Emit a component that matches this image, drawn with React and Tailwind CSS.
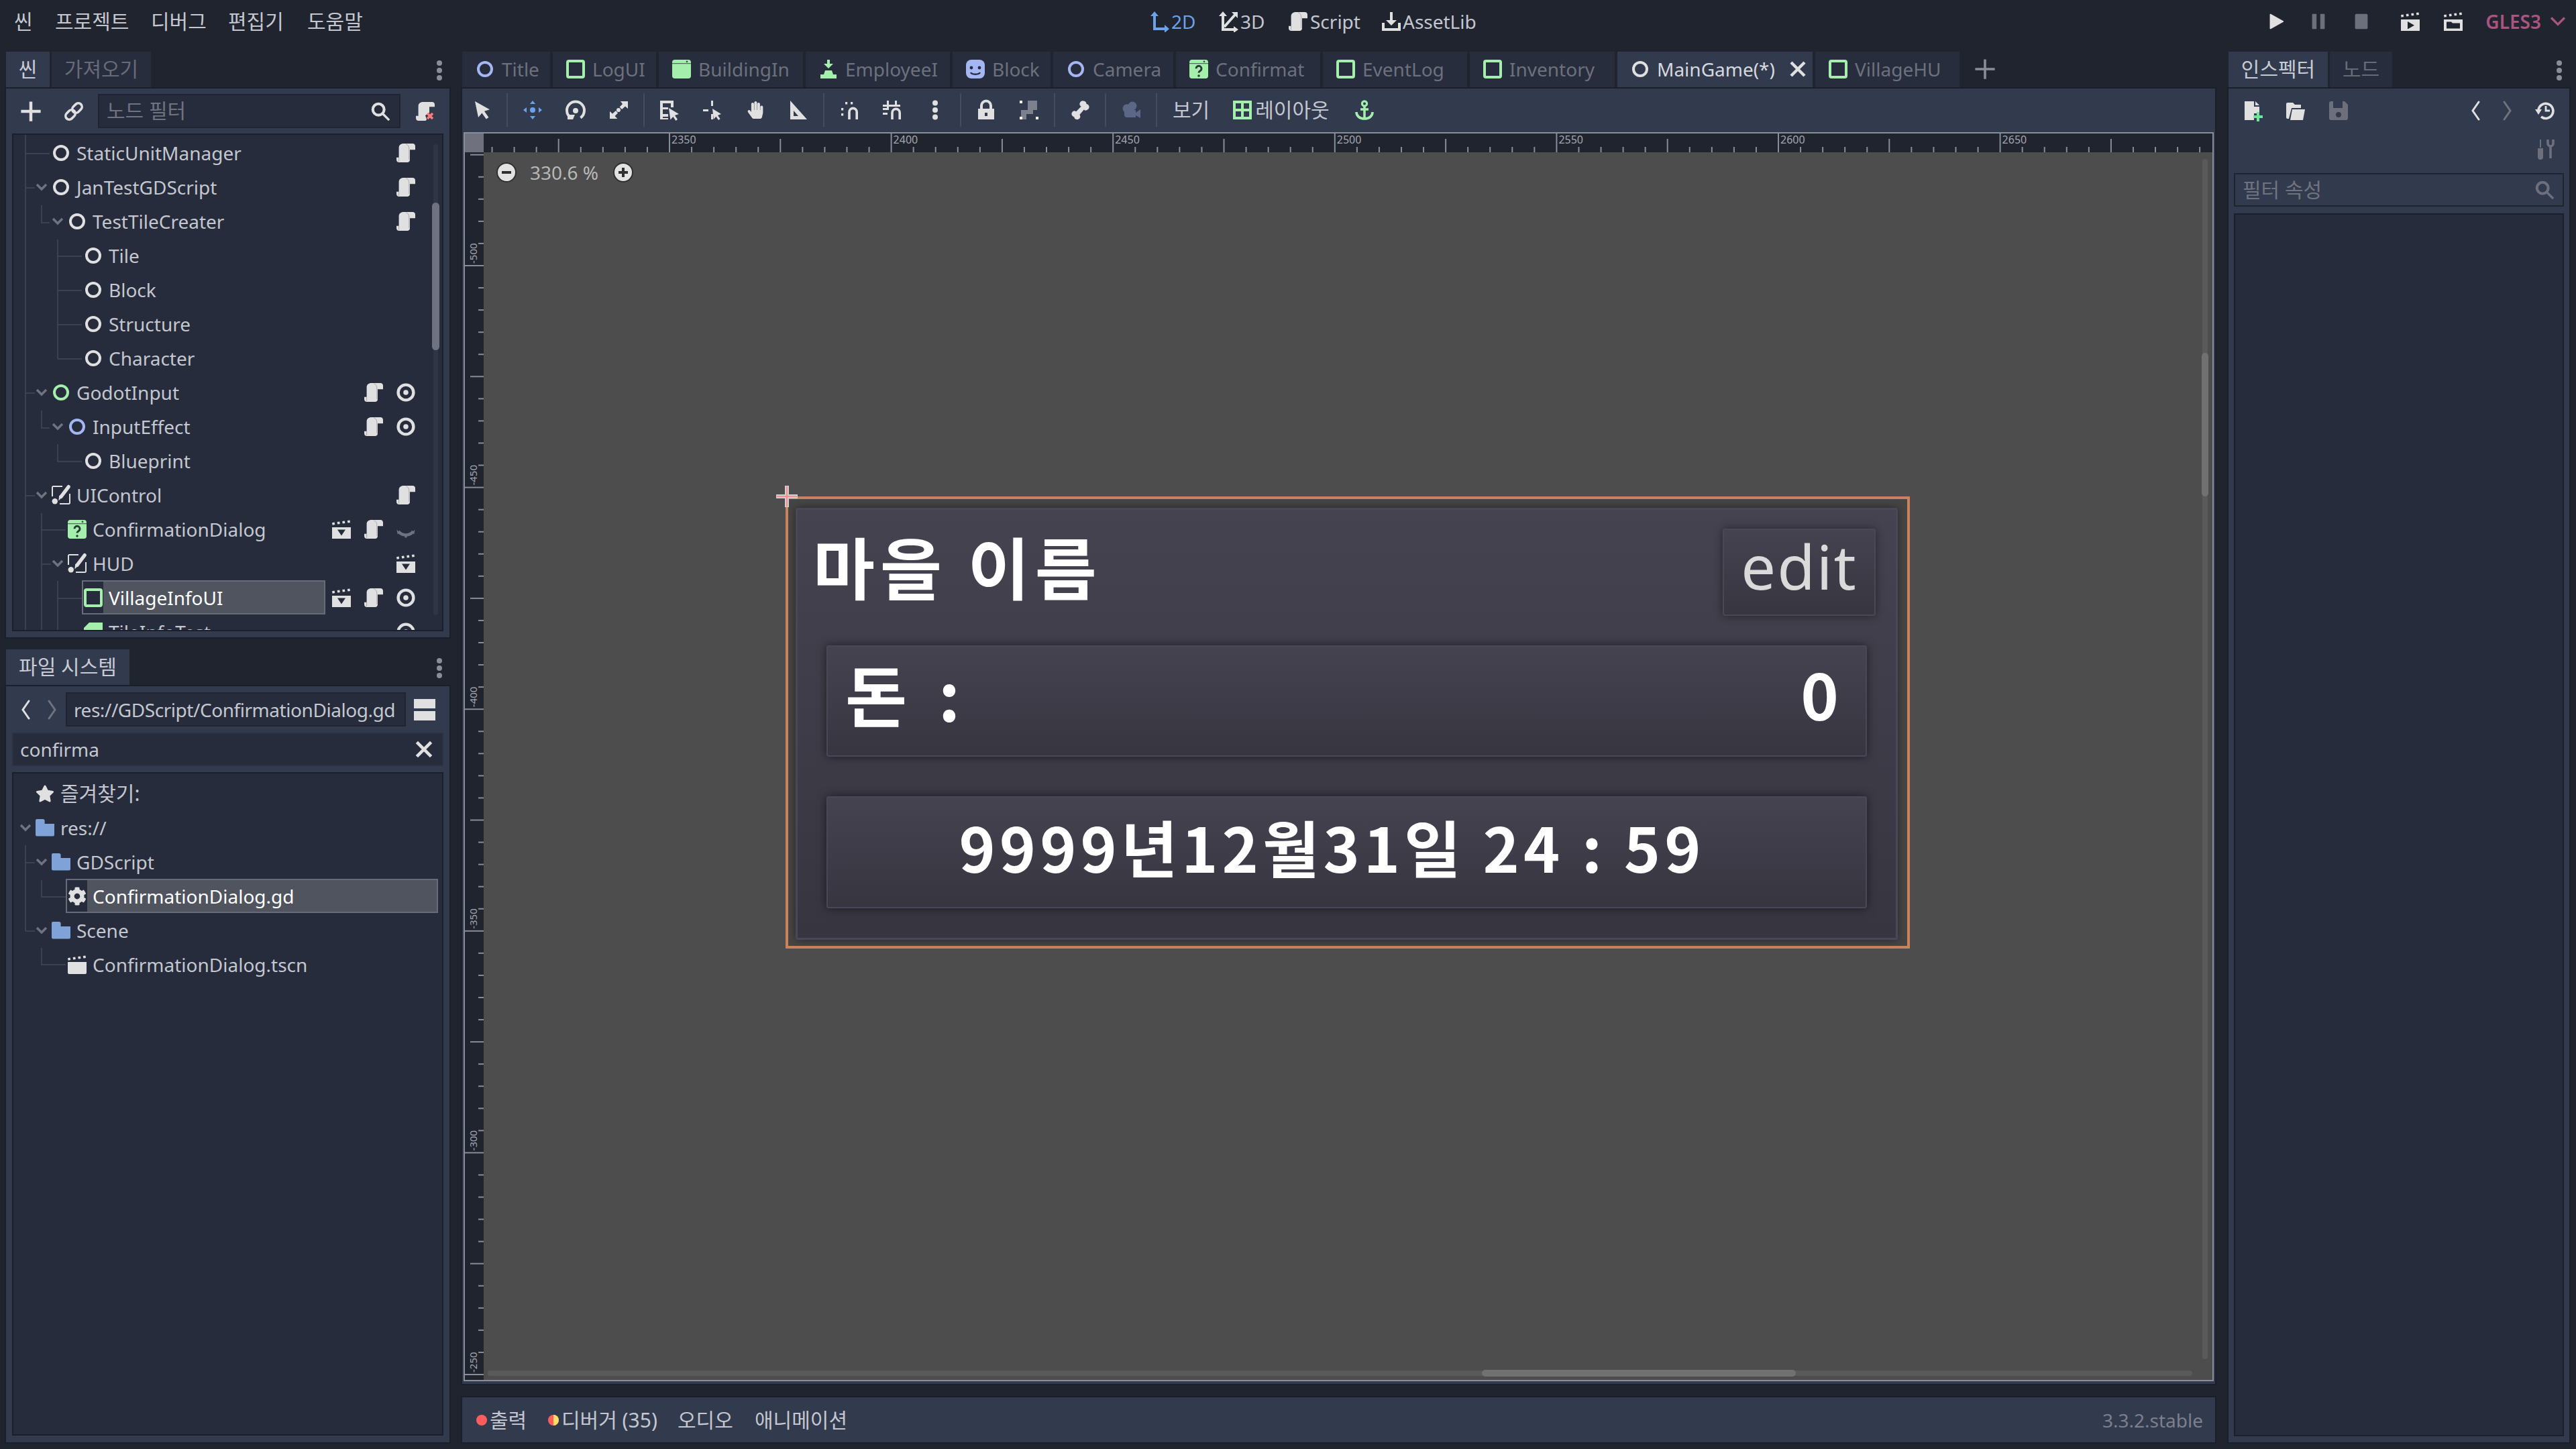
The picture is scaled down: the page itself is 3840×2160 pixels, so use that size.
import { FaCog, FaStar, FaHandPaper } from 'react-icons/fa';

const WHITE = '#e0e0e0';
const DIM = '#6f7380';
const GREEN = '#a5efac';
const BLUE = '#a5b7f3';
const TREE_BG = '#262c3b';

function Ico({ size = 32, children, className = '' }) {
  return (
    <svg viewBox="0 0 16 16" width={size} height={size} className={`shrink-0 ${className}`}>
      {children}
    </svg>
  );
}

const Ring = ({ c = WHITE }) => (
  <Ico><circle cx="8" cy="8" r="5" fill="none" stroke={c} strokeWidth="2" /></Ico>
);
const PanelBox = () => (
  <Ico><rect x="2" y="2" width="12" height="12" rx="1" fill="none" stroke={GREEN} strokeWidth="2" /></Ico>
);
const DialogBox = ({ q = true }) => (
  <Ico>
    <rect x="1" y="1" width="14" height="14" rx="2" fill={GREEN} />
    <rect x="1" y="3.6" width="14" height=".5" fill="#3c5048" />
    <circle cx="12" cy="2.4" r=".7" fill="#3c5048" />
    {q && <path d="M6 7.6a2 2 0 1 1 3.1 1.7c-.8.5-1.1.8-1.1 1.5" fill="none" stroke="#2a3a34" strokeWidth="1.5" />}
    {q && <circle cx="8" cy="13" r=".9" fill="#2a3a34" />}
  </Ico>
);
const BrushCtl = () => (
  <Ico>
    <path d="M9 1.5H2.2a.7.7 0 0 0-.7.7V9M14.5 7v6.8a.7.7 0 0 1-.7.7H7" fill="none" stroke={WHITE} strokeWidth="1" />
    <path d="M13.6 1.8 8 9.2" fill="none" stroke={WHITE} strokeWidth="2.6" strokeLinecap="round" />
    <path d="M6.6 8.2l2 1.6-2.4 2.4z" fill={WHITE} />
    <circle cx="3.4" cy="12.6" r="2.1" fill={WHITE} />
  </Ico>
);
const Script = ({ c = WHITE }) => (
  <Ico>
    <path d="M6.4 1H13c1.2 0 2 .8 2 2v2.6h-4V13c0 1.2-.8 2-2 2H3c-1.2 0-2-.8-2-2v-1.6h1.8V4.2C2.8 2.2 4.2 1 6.4 1z" fill={c} />
    <path d="M8.2 1.4C9.6 2 10.4 3 10.4 4.8V13" fill="none" stroke="#a8a8a8" strokeWidth=".5" />
    <path d="M2.8 11.4v3" fill="none" stroke="#a8a8a8" strokeWidth=".5" />
  </Ico>
);
const Ticks = ({ c = WHITE }) => (
  <path d="M1 3.1l1.8-.4.3 1.8-1.8.4zM4.8 2.5l1.8-.3.3 1.8-1.8.3zM8.6 2l1.8-.3.3 1.800-1.800.3zM12.4 1.500l1.800-.3.3 1.800-1.800.3z" fill={c} />
);
const Clapper = ({ kind = 'down', bg = TREE_BG }) => (
  <Ico>
    <Ticks />
    <path d="M1 6.5h14V15H1z" fill={WHITE} />
    {kind === 'down' && <path d="M5 8.3h6l-3 4.4z" fill={bg} />}
    {kind === 'play' && <path d="M6 8v5.8l5-2.9z" fill={bg} />}
    {kind === 'folder' && <path d="M3 8.3h3.5l1 1H13v4H3z" fill={bg} />}
  </Ico>
);
const Eye = () => (
  <Ico>
    <circle cx="8" cy="8" r="5.7" fill="none" stroke={WHITE} strokeWidth="2.2" />
    <circle cx="8" cy="8" r="1.9" fill={WHITE} />
  </Ico>
);
const EyeOff = () => (
  <Ico>
    <path d="M2.5 9.5c1.2 1.8 3.2 2.7 5.5 2.700s4.300-.9 5.500-2.700" fill="none" stroke={DIM} strokeWidth="2.2" />
    <path d="M1.2 8.3l2.3 2.2-1.600 1.200zM14.800 8.300l-2.300 2.200 1.600 1.200zM7 11.500h2l-.3 2.700H7.300z" fill={DIM} />
  </Ico>
);
const Folder = () => (
  <Ico>
    <path d="M2 1.500h4.500c.8 0 1.300.5 1.300 1.300v2.200H15v8.300a1 1 0 0 1-1 1H2a1 1 0 0 1-1-1v-10.800a1 1 0 0 1 1-1z" fill="#7fa3d8" />
  </Ico>
);
const FilmFile = () => (
  <Ico>
    <Ticks />
    <path d="M1 6h14v8a1 1 0 0 1-1 1H2a1 1 0 0 1-1-1z" fill={WHITE} />
  </Ico>
);
const Chevron = ({ c = DIM }) => (
  <svg viewBox="0 0 20 20" width="20" height="20" className="shrink-0">
    <path d="M3 6l7 7 7-7" fill="none" stroke={c} strokeWidth="3.5" />
  </svg>
);
const Search = ({ c = WHITE }) => (
  <Ico size={30}>
    <circle cx="6.5" cy="6.5" r="4.5" fill="none" stroke={c} strokeWidth="2.2" />
    <path d="M10 10l5 5" stroke={c} strokeWidth="1.8" fill="none" />
  </Ico>
);
const Kebab = ({ c = '#8b8e98' }) => (
  <svg viewBox="0 0 8 30" width="8" height="30" className="shrink-0">
    <circle cx="4" cy="4" r="4" fill={c} /><circle cx="4" cy="15" r="4" fill={c} /><circle cx="4" cy="26" r="4" fill={c} />
  </svg>
);
const Angle = ({ left = true, c = WHITE }) => (
  <svg viewBox="0 0 16 32" width="16" height="32" className="shrink-0">
    <path d={left ? 'M13 3 4 16l9 13' : 'M3 3l9 13-9 13'} fill="none" stroke={c} strokeWidth="3" strokeLinecap="round" />
  </svg>
);
const Cross = ({ size = 32 }) => (
  <Ico size={size}>
    <path d="M3 3l10 10M13 3 3 13" stroke={WHITE} strokeWidth="2.2" fill="none" />
  </Ico>
);

const toolIcons = {
  select: <Ico><path d="M3 1.5l11 6.100-4 1.300 3.200 4.600-1.800 1.300-3.200-4.500-2.700 3.200z" fill={WHITE} /></Ico>,
  move: (
    <Ico>
      <g fill="#6ba2ea">
        <path d="M8 1l2 2.5H6zM8 15l2-2.500H6zM1 8l2.500-2v4zM15 8l-2.500-2v4z" />
        <circle cx="8" cy="8" r="2" />
      </g>
    </Ico>
  ),
  rotate: (
    <Ico>
      <path d="M5 14C2.800 12.800 1.500 10.700 1.500 8.300a6.500 6.500 0 0 1 13 0c0 2.300-1 4.200-2.800 5.500" fill="none" stroke={WHITE} strokeWidth="2" />
      <circle cx="8" cy="8.5" r="2" fill={WHITE} />
      <path d="M2 11.5h5.500l-1.500 3.500H2z" fill={WHITE} />
    </Ico>
  ),
  scale: (
    <Ico>
      <path d="M9.500 1.500H15V7l-2-1.800-2.500 2.300-1.700-1.700L11 3.500zM1.500 9l2 1.800L6 8.500l1.500 1.700-2.200 2.300 1.900 2H1.500z" fill={WHITE} />
      <circle cx="8" cy="8" r="1.5" fill={WHITE} />
    </Ico>
  ),
  list: (
    <Ico>
      <path d="M1 1h10v5H9V3H3v3h4v1.500H3V11h4v2H3v1h4v1H1z" fill={WHITE} />
      <path d="M7.500 6.500l7.500 4.500-3 1 2 3-1.300 1-2-3-2 2.200z" fill={WHITE} />
    </Ico>
  ),
  pivot: (
    <Ico>
      <path d="M7 1h1.500v4H7zM1 7.500h4V9H1zM7 11h1.500v4H7z" fill={WHITE} />
      <path d="M8 7l6.500 4-2.500 1 1.800 2.600-1.300.9-1.800-2.600-1.800 2z" fill={WHITE} />
    </Ico>
  ),
  ruler: <Ico><path fillRule="evenodd" d="M2 1l12.500 14H2zM4.500 8.500V12.500H8z" fill={WHITE} /></Ico>,
  snap: (
    <Ico>
      <path d="M8 15V9.500a2.800 2.800 0 0 1 5.600 0V15" fill="none" stroke={WHITE} strokeWidth="1.8" />
      <path d="M5 2h1.600v1.800H5zM9 2h1.600v1.800H9zM2 6.500h1.600v1.800H2zM2 10.500h1.600v1.800H2z" fill={WHITE} />
    </Ico>
  ),
  grid: (
    <Ico>
      <path d="M4 1h1.500v3H10V1h1.500v3H14v1.500H5.500V8H1V6.500h3v-1H1V4h3zM1 10h3.500v1.500H1z" fill={WHITE} />
      <path d="M8 15V10a2.800 2.800 0 0 1 5.600 0v5" fill="none" stroke={WHITE} strokeWidth="1.8" />
    </Ico>
  ),
  dots: <Ico><circle cx="8" cy="2.8" r="2" fill={WHITE} /><circle cx="8" cy="8" r="2" fill={WHITE} /><circle cx="8" cy="13.2" r="2" fill={WHITE} /></Ico>,
  lock: (
    <Ico>
      <path d="M4.500 7V4.800a3.500 3.500 0 0 1 7 0V7" fill="none" stroke={WHITE} strokeWidth="2" />
      <path fillRule="evenodd" d="M2 7h12v8H2zM7 10v2.500h2V10z" fill={WHITE} />
    </Ico>
  ),
  group: (
    <Ico>
      <path d="M7 1h7v7h-3v3H6v4H2V8h5z" fill="#7d818d" />
      <path d="M1 1h2v2H1zM13 13h2v2h-2zM1 13h2v2H1z" fill="#fff" />
    </Ico>
  ),
  bone: (
    <Ico>
      <path d="M10.500 1.200a2.300 2.300 0 0 1 2.300 2.300 2.300 2.300 0 0 1 .8 4.300 2 2 0 0 1-2.700-.1L7.700 11.500a2.200 2.200 0 0 1-.7 3.300 2.300 2.300 0 0 1-3.400-1.600 2.300 2.300 0 0 1-1.200-3.900 2.200 2.200 0 0 1 2.700-.2L8.800 5.400a2.300 2.300 0 0 1 1.700-4.200z" fill={WHITE} />
    </Ico>
  ),
  camera: (
    <Ico>
      <g fill="#5c6788">
        <circle cx="5" cy="6.800" r="3.200" />
        <circle cx="9" cy="5" r="3.200" />
        <path d="M3 8h8.500v5.500H5c-1.200 0-2-.8-2-2z" />
        <path d="M11.500 10l3.500-2.500V14l-3.500-2z" />
      </g>
    </Ico>
  ),
};

function Tool({ name }) {
  return (
    <div className="w-[64px] h-full flex items-center justify-center">
      {name === 'pan' ? <FaHandPaper size={26} color={WHITE} /> : toolIcons[name]}
    </div>
  );
}
const Sep = () => (
  <div className="w-[12px] h-full flex items-center justify-center">
    <div className="w-[2px] h-[50px] bg-[#454c60]" />
  </div>
);

// 탭 목록
const sceneTabs = [
  { w: 'w-[131px]', icon: <Ring c={BLUE} />, label: 'Title' },
  { w: 'w-[154px]', icon: <PanelBox />, label: 'LogUI' },
  { w: 'w-[215px]', icon: <DialogBox q={false} />, label: 'BuildingIn' },
  {
    w: 'w-[215px]',
    icon: (
      <Ico>
        <path d="M7 1h2v3h2.500L8 7.500 4.500 4H7zM5.500 9h5l1 3H14v3H2v-3h2.500z" fill={GREEN} />
      </Ico>
    ),
    label: 'EmployeeI',
  },
  {
    w: 'w-[146px]',
    icon: (
      <Ico>
        <rect x="1" y="1" width="14" height="14" rx="4" fill={BLUE} />
        <circle cx="5" cy="7" r="1.2" fill="#262c3b" />
        <circle cx="11" cy="7" r="1.2" fill="#262c3b" />
        <path d="M4.500 10.500c1 1.800 6 1.800 7 0" fill="none" stroke="#262c3b" strokeWidth="1.2" />
      </Ico>
    ),
    label: 'Block',
  },
  { w: 'w-[179px]', icon: <Ring c={BLUE} />, label: 'Camera' },
  { w: 'w-[215px]', icon: <DialogBox />, label: 'Confirmat' },
  { w: 'w-[215px]', icon: <PanelBox />, label: 'EventLog' },
  { w: 'w-[216px]', icon: <PanelBox />, label: 'Inventory' },
  { w: 'w-[291px]', icon: <Ring />, label: 'MainGame(*)', active: true },
  { w: 'w-[215px]', icon: <PanelBox />, label: 'VillageHU' },
];

function SceneTabs() {
  return (
    <div className="h-[55px] flex items-stretch">
      {sceneTabs.map((t) => (
        <div
          key={t.label}
          className={`${t.w} mr-[4px] last:mr-0 shrink-0 flex items-center pl-[18px] pb-[3px] gap-[9px] text-[28px] ${
            t.active ? 'bg-[#323a4e] text-[#d6d8de]' : 'bg-[#272d3c] text-[#6d717d]'
          }`}
        >
          {t.icon}
          <span className="whitespace-nowrap">{t.label}</span>
          {t.active && <div className="ml-auto mr-[6px]"><Cross /></div>}
        </div>
      ))}
      <div className="ml-[16px] pb-[3px] flex items-center">
        <Ico size={36}><path d="M8 1.500v13M1.500 8h13" stroke="#8a8d98" strokeWidth="1.6" fill="none" /></Ico>
      </div>
    </div>
  );
}

// 노드 트리
const sceneRows = [
  { d: 0, icon: <Ring />, label: 'StaticUnitManager', r: [null, null, <Script />] },
  { d: 0, chev: true, icon: <Ring />, label: 'JanTestGDScript', r: [null, null, <Script />] },
  { d: 1, chev: true, icon: <Ring />, label: 'TestTileCreater', r: [null, null, <Script />] },
  { d: 2, icon: <Ring />, label: 'Tile' },
  { d: 2, icon: <Ring />, label: 'Block' },
  { d: 2, icon: <Ring />, label: 'Structure' },
  { d: 2, icon: <Ring />, label: 'Character' },
  { d: 0, chev: true, icon: <Ring c={GREEN} />, label: 'GodotInput', r: [null, <Script />, <Eye />] },
  { d: 1, chev: true, icon: <Ring c={BLUE} />, label: 'InputEffect', r: [null, <Script />, <Eye />] },
  { d: 2, icon: <Ring />, label: 'Blueprint' },
  { d: 0, chev: true, icon: <BrushCtl />, label: 'UIControl', r: [null, null, <Script />] },
  { d: 1, icon: <DialogBox />, label: 'ConfirmationDialog', r: [<Clapper />, <Script />, <EyeOff />] },
  { d: 1, chev: true, icon: <BrushCtl />, label: 'HUD', r: [null, null, <Clapper />] },
  { d: 2, icon: <PanelBox />, label: 'VillageInfoUI', selected: true, r: [<Clapper />, <Script />, <Eye />] },
  {
    d: 2,
    icon: <Ico><path d="M5 1h10v14H1V5z" fill={GREEN} /></Ico>,
    label: 'TileInfoTest',
    r: [null, null, <Eye />],
  },
];

const fileRows = [
  { d: -1, icon: <FaStar size={28} color={WHITE} className="mx-[1px]" />, label: '즐겨찾기:', kr: true },
  { d: -1, chev: true, icon: <Folder />, label: 'res://' },
  { d: 0, chev: true, icon: <Folder />, label: 'GDScript' },
  { d: 1, icon: <FaCog size={28} color={WHITE} className="mx-[1px]" />, label: 'ConfirmationDialog.gd', selected: true },
  { d: 0, chev: true, icon: <Folder />, label: 'Scene' },
  { d: 1, icon: <FilmFile />, label: 'ConfirmationDialog.tscn' },
];

function TreeRow({ row, fill }) {
  return (
    <div className="h-[51px] flex items-stretch" style={{ paddingLeft: 32 + 24 * row.d }}>
      <div className="w-[20px] mr-[2px] flex items-center justify-center">{row.chev && <Chevron />}</div>
      <div
        className={`flex-1 min-w-0 flex items-stretch ${
          row.selected ? 'bg-[#50545f] border-2 border-[#686c7a] text-white' : 'border-2 border-transparent text-[#c4c7cf]'
        }`}
      >
        <div className={`w-[30px] flex items-center justify-center ${row.selected ? 'bg-[#262c3b]' : ''}`}>{row.icon}</div>
        <span className={`ml-[8px] self-center whitespace-nowrap ${row.kr ? 'text-[30px]' : 'text-[28px]'}`}>{row.label}</span>
      </div>
      {fill ? (
        <div className="flex pr-[30px] items-center">
          {[0, 1, 2].map((i) => (
            <div key={i} className="w-[48px] flex justify-center">{row.r && row.r[i]}</div>
          ))}
        </div>
      ) : (
        <div className="w-[6px]" />
      )}
    </div>
  );
}

// 트리 가이드 라인 (도크 좌표 그대로)
const Guides = ({ d }) => (
  <svg className="absolute left-0 top-0 pointer-events-none" width="640" height="1000" fill="none" stroke="#3b4151" strokeWidth="2">
    <path d={d} />
  </svg>
);
const sceneGuides =
  'M18 0V742M18 28H54M18 79H32M18 385H32M18 538H32' +
  'M42 105V131H54M42 411V437H54M42 564V740M42 589H78M42 640H56' +
  'M66 156V334M66 181H102M66 232H102M66 283H102M66 334H102' +
  'M66 461V487H102M66 665V740M66 691H102';
const fileGuides = 'M18 107V235M18 133H32M18 235H32M42 159V184H78M42 260V285H78';

function Ruler() {
  const majors = [-1, 0, 1, 2, 3, 4, 5, 6, 7];
  const small = [];
  for (let i = -10; i < 90; i++) {
    if (i % 5 !== 0) small.push(277 + i * 33.06);
  }
  return (
    <svg width="2577" height="28" className="block shrink-0">
      <g stroke="#8a8d98" strokeWidth="2">
        {small.map((x) => <line key={x} x1={x} x2={x} y1="20" y2="28" />)}
        {majors.map((k) => <line key={k} x1={277 + k * 330.6 + 165.3} x2={277 + k * 330.6 + 165.3} y1="8" y2="28" />)}
        {majors.map((k) => <line key={k} x1={277 + k * 330.6} x2={277 + k * 330.6} y1="0" y2="28" />)}
      </g>
      {majors.filter((k) => k >= 0).map((k) => (
        <text key={k} x={277 + k * 330.6 + 3} y="15" fontSize="16" fill="#a3a6b0">{2350 + k * 50}</text>
      ))}
    </svg>
  );
}

function VRuler() {
  const labels = [-250, -300, -350, -400, -450, -500];
  const small = [];
  for (let i = -5; i < 62; i++) {
    if (i % 5 !== 0) small.push(1822 - i * 33.06);
  }
  return (
    <svg width="28" height="1832" className="block shrink-0">
      <g stroke="#8a8d98" strokeWidth="2">
        {small.map((y) => <line key={y} x1="20" x2="28" y1={y} y2={y} />)}
        {labels.map((l, k) => <line key={l} x1="8" x2="28" y1={1822 - k * 330.6 - 165.3} y2={1822 - k * 330.6 - 165.3} />)}
        {labels.map((l, k) => <line key={l} x1="0" x2="28" y1={1822 - k * 330.6} y2={1822 - k * 330.6} />)}
      </g>
      {labels.map((l, k) => (
        <text key={l} transform={`translate(18,${1822 - k * 330.6 - 3}) rotate(-90)`} fontSize="15" fill="#a3a6b0">{l}</text>
      ))}
    </svg>
  );
}

const pixelText = "font-['Noto_Sans_CJK_KR','Noto_Sans',sans-serif] font-bold text-white";

function GameUI() {
  return (
    <div className="absolute left-[450px] top-[513px] w-[1676px] h-[674px] border-[4px] border-[#c9835c] bg-[#454545] pl-[11px] pr-[14px] pt-[13px] pb-[9px]">
      <div className="h-full flex flex-col bg-linear-to-b from-[#45434f] to-[#373540] shadow-[inset_0_0_0_3px_#4a4857,0_0_12px_rgba(0,0,0,0.45)] rounded-[3px] pt-[31px]">
        <div className="h-[130px] flex items-center justify-between pl-[26px] pr-[33px]">
          <span className={`${pixelText} text-[100px] leading-none tracking-[8px] whitespace-nowrap pb-[20px]`}>마을 이름</span>
          <div className="w-[228px] h-[130px] flex items-center justify-center rounded-[4px] bg-linear-to-b from-[#45434f] to-[#373540] shadow-[inset_0_0_0_2px_#4a4857,0_0_14px_rgba(0,0,0,0.45)] text-[#dadada] text-[92px] leading-none tracking-[2px] font-['Noto_Sans',sans-serif] pb-[18px]">
            edit
          </div>
        </div>
        <div className="mx-[46px] mt-[44px] h-[166px] flex items-center justify-between pl-[28px] pr-[42px] pb-[24px] rounded-[4px] bg-linear-to-b from-[#45434f] to-[#373540] shadow-[inset_0_0_0_2px_#4a4857,0_0_14px_rgba(0,0,0,0.55)]">
          <span className={`${pixelText} text-[100px] leading-none whitespace-nowrap tracking-[12px]`}>돈 :</span>
          <span className={`${pixelText} text-[96px] leading-none`}>0</span>
        </div>
        <div className="mx-[46px] mt-[59px] h-[167px] flex items-center justify-center pr-[44px] pb-[20px] rounded-[4px] bg-linear-to-b from-[#45434f] to-[#373540] shadow-[inset_0_0_0_2px_#4a4857,0_0_14px_rgba(0,0,0,0.55)]">
          <span className={`${pixelText} text-[92px] leading-none whitespace-nowrap tracking-[6px]`}>9999년12월31일 24 : 59</span>
        </div>
      </div>
    </div>
  );
}

function Viewport() {
  return (
    <div className="relative flex-1 min-h-0 border-2 border-[#8a8d9a] flex flex-col overflow-hidden bg-[#4d4d4d]">
      <div className="flex h-[28px] shrink-0 bg-[#20242f]">
        <div className="w-[28px] h-[28px] bg-[#6f727e] shrink-0" />
        <Ruler />
      </div>
      <div className="flex flex-1 min-h-0">
        <div className="w-[28px] bg-[#20242f] shrink-0"><VRuler /></div>
        <div className="relative flex-1 bg-[#4d4d4d]">
          <div className="absolute left-[19px] top-[15px] flex items-center text-[#b8b8b8] text-[28px]">
            <svg width="30" height="30" viewBox="0 0 30 30" className="shrink-0">
              <circle cx="15" cy="15" r="14" fill="#e2e2e2" stroke="#2f2f2f" strokeWidth="2" />
              <path d="M8 15h14" stroke="#2f2f2f" strokeWidth="4" />
            </svg>
            <span className="ml-[20px] w-[104px] whitespace-nowrap">330.6 %</span>
            <svg width="30" height="30" viewBox="0 0 30 30" className="shrink-0 ml-[20px]">
              <circle cx="15" cy="15" r="14" fill="#e2e2e2" stroke="#2f2f2f" strokeWidth="2" />
              <path d="M8 15h14M15 8v14" stroke="#2f2f2f" strokeWidth="4" />
            </svg>
          </div>
          <GameUI />
          {/* 원점 십자 표시 */}
          <div className="absolute left-[436px] top-[497px] w-[32px] h-[32px]">
            <svg width="32" height="32" viewBox="0 0 32 32">
              <path d="M14 0h4v14h14v4H18v14h-4V18H0v-4h14z" fill="#ff8c8c" stroke="#cfcfcf" strokeWidth="2" />
            </svg>
          </div>
          {/* 스크롤바 */}
          <div className="absolute right-[7px] top-[10px] bottom-[31px] w-[8px] rounded-full bg-[#5a5a5a]">
            <div className="absolute left-[-1px] right-[-1px] top-[289px] h-[214px] rounded-full bg-[#717171]" />
          </div>
          <div className="absolute left-[6px] right-[30px] bottom-[6px] h-[8px] rounded-full bg-[#5a5a5a]">
            <div className="absolute top-[-1px] bottom-[-1px] left-[1482px] w-[468px] rounded-full bg-[#717171]" />
          </div>
        </div>
      </div>
    </div>
  );
}

function TopBar() {
  const menus = [
    ['w-[61px]', '씬'],
    ['w-[143px]', '프로젝트'],
    ['w-[115px]', '디버그'],
    ['w-[118px]', '편집기'],
    ['w-[100px]', '도움말'],
  ];
  return (
    <div className="h-[77px] shrink-0 flex items-center text-[28px] text-[#c4c7cf] pb-[13px]">
      <div className="pl-[21px] w-[1712px] flex shrink-0 text-[30px]">
        {menus.map(([w, m]) => <span key={m} className={`${w} whitespace-nowrap`}>{m}</span>)}
      </div>
      <div className="flex items-center">
        <Ico>
          <path d="M4.500 3v10.500H13" fill="none" stroke="#6ba2ea" strokeWidth="2" />
          <path d="M4.500 0.500l3 3.500h-6zM15.500 13.500l-3.500-3v6z" fill="#6ba2ea" />
        </Ico>
        <span className="ml-[2px] w-[69px] text-[#6ba2ea]">2D</span>
        <Ico>
          <path d="M4 3v11h8M13 3 5 12" fill="none" stroke={WHITE} strokeWidth="2" />
          <path d="M4 .5l3 3.500H1zM15 1v4.500L10.500 1zM15.500 14l-3.500-2.500v5z" fill={WHITE} />
        </Ico>
        <span className="ml-[2px] w-[70px]">3D</span>
        <Script />
        <span className="ml-[2px] w-[105px]">Script</span>
        <Ico>
          <path d="M7 1h2v6h3l-4 4-4-4h3zM1 9h2v4h10V9h2v6H1z" fill={WHITE} />
        </Ico>
        <span className="ml-[1px]">AssetLib</span>
      </div>
      <div className="ml-auto flex items-center pr-[16px]">
        <Ico size={30}><path d="M4 2.500 14 8 4 13.500z" fill={WHITE} stroke={WHITE} strokeWidth="1" strokeLinejoin="round" /></Ico>
        <Ico size={30} className="ml-[34px]"><path d="M3 2h3.500v12H3zM9.500 2H13v12H9.500z" fill="#6d707c" /></Ico>
        <Ico size={30} className="ml-[34px]"><rect x="3" y="2" width="10" height="12" rx="1" fill="#6d707c" /></Ico>
        <div className="ml-[42px]"><Clapper kind="play" bg="#20242f" /></div>
        <div className="ml-[32px]"><Clapper kind="folder" bg="#20242f" /></div>
        <span className="ml-[32px] text-[#a8557f] font-semibold">GLES3</span>
        <svg viewBox="0 0 20 20" width="22" height="22" className="ml-[14px]">
          <path d="M1 5l9 9 9-9" fill="none" stroke="#a8557f" strokeWidth="3" />
        </svg>
      </div>
    </div>
  );
}

function DockTabs({ tabs, right = true }) {
  return (
    <div className="h-[55px] flex items-stretch shrink-0">
      {tabs.map((t) => (
        <div
          key={t.label}
          className={`${t.w} mr-[3px] pb-[3px] flex items-center justify-center text-[30px] whitespace-nowrap ${
            t.active ? 'bg-[#323a4e] text-[#c8cbd3]' : 'bg-[#272d3c] text-[#676b77]'
          }`}
        >
          {t.label}
        </div>
      ))}
      {right && <div className="ml-auto pr-[11px] flex items-center"><Kebab /></div>}
    </div>
  );
}

function LeftDock() {
  return (
    <div className="w-[661px] shrink-0 flex flex-col">
      <DockTabs tabs={[{ label: '씬', w: 'w-[65px]', active: true }, { label: '가져오기', w: 'w-[148px]' }]} />
      <div className="h-[818px] bg-[#323a4e] shadow-[0_0_0_2px_#1b1f2a] px-[9px] pt-[8px] pb-[9px] flex flex-col">
        <div className="h-[51px] flex items-center shrink-0">
          <div className="w-[36px] ml-[10px] flex justify-center"><Ico size={36}><path d="M8 1.500v13M1.500 8h13" stroke={WHITE} strokeWidth="2" fill="none" /></Ico></div>
          <div className="w-[37px] ml-[27px] flex justify-center">
            <Ico>
              <g transform="rotate(45 8 8)" fill="none" stroke={WHITE} strokeWidth="1.8">
                <rect x="5.300" y="0.500" width="5.400" height="8" rx="2.700" />
                <rect x="5.300" y="7.500" width="5.400" height="8" rx="2.700" />
              </g>
            </Ico>
          </div>
          <div className="w-[451px] ml-[18px] h-full bg-[#262c3b] border-2 border-[#1f2431] flex items-center pl-[11px] pr-[13px] text-[30px] text-[#6f7380]">
            <span className="flex-1 whitespace-nowrap pb-[2px]">노드 필터</span>
            <Search />
          </div>
          <div className="ml-[21px]">
            <Ico>
              <path d="M6.400 1H13c1.200 0 2 .8 2 2v1.600h-4V9l-3 2 1 3c-.2.6-.6 1-1 1H3c-1.200 0-2-.8-2-2v-1.600h1.800V4.200C2.800 2.200 4.200 1 6.400 1z" fill={WHITE} />
              <path d="M9.500 9.500l4 4M13.500 9.500l-4 4" stroke="#ff7a7a" strokeWidth="1.8" fill="none" />
            </Ico>
          </div>
        </div>
        <div className="relative mt-[8px] flex-1 min-h-0 bg-[#262c3b] border-2 border-[#1b1f2a] pt-[1px] overflow-hidden">
          <Guides d={sceneGuides} />
          <div className="relative">
            {sceneRows.map((r) => <TreeRow key={r.label} row={r} fill />)}
          </div>
          <div className="absolute right-[6px] top-[14px] h-[702px] w-[7px] rounded-full bg-[#2f3544]">
            <div className="absolute left-[-2px] right-[-2px] top-[87px] h-[220px] rounded-full bg-[#6f7380]" />
          </div>
        </div>
      </div>

      <div className="mt-[18px]">
        <DockTabs tabs={[{ label: '파일 시스템', w: 'w-[184px]', active: true }]} />
      </div>
      <div className="h-[1127px] bg-[#323a4e] shadow-[0_0_0_2px_#1b1f2a] px-[9px] pt-[9px] pb-[10px] flex flex-col">
        <div className="h-[51px] flex items-center shrink-0">
          <div className="w-[20px] ml-[10px] flex justify-center"><Angle /></div>
          <div className="w-[20px] ml-[20px] flex justify-center"><Angle left={false} c="#6f7380" /></div>
          <div className="w-[507px] ml-[10px] h-full bg-[#262c3b] border-2 border-[#1f2431] flex items-center pl-[10px] text-[28px] tracking-[-0.45px] text-[#c4c7cf] whitespace-nowrap overflow-hidden">
            res://GDScript/ConfirmationDialog.gd
          </div>
          <div className="ml-[12px] w-[32px] h-[32px] flex flex-col justify-between">
            <div className="h-[14px] bg-[#e0e0e0]" />
            <div className="h-[14px] bg-[#e0e0e0]" />
          </div>
        </div>
        <div className="mt-[9px] h-[50px] shrink-0 bg-[#262c3b] border-2 border-[#2b3244] flex items-center pl-[10px] pr-[10px] text-[28px] text-[#c4c7cf]">
          <span className="flex-1">confirma</span>
          <Cross size={34} />
        </div>
        <div className="relative mt-[9px] flex-1 min-h-0 bg-[#262c3b] border-2 border-[#1b1f2a] pt-[4px] overflow-hidden">
          <Guides d={fileGuides} />
          <div className="relative">
            {fileRows.map((r) => <TreeRow key={r.label} row={r} />)}
          </div>
        </div>
      </div>
    </div>
  );
}

function Center() {
  return (
    <div className="w-[2613px] shrink-0 ml-[19px] flex flex-col">
      <SceneTabs />
      <div className="h-[1931px] bg-[#323a4e] shadow-[0_0_0_2px_#1b1f2a] flex flex-col px-[2px] pb-[4px]">
        <div className="h-[65px] shrink-0 flex items-center -ml-[5px] pb-[2px]">
          <Tool name="select" /><Sep />
          <Tool name="move" /><Tool name="rotate" /><Tool name="scale" /><Sep />
          <Tool name="list" /><Tool name="pivot" /><Tool name="pan" /><Tool name="ruler" /><Sep />
          <Tool name="snap" /><Tool name="grid" /><Tool name="dots" /><Sep />
          <Tool name="lock" /><Tool name="group" /><Sep />
          <Tool name="bone" /><Sep />
          <Tool name="camera" /><Sep />
          <span className="ml-[18px] text-[30px] text-[#c4c7cf] whitespace-nowrap">보기</span>
          <div className="ml-[33px]">
            <Ico>
              <path fillRule="evenodd" d="M1 1h14v14H1zM3 3v4h4V3zM9 3v4h4V3zM3 9v4h4V9zM9 9v4h4V9z" fill={GREEN} />
            </Ico>
          </div>
          <span className="ml-[3px] text-[30px] text-[#c4c7cf] whitespace-nowrap">레이아웃</span>
          <div className="ml-[36px]">
            <Ico>
              <circle cx="8" cy="3.2" r="1.8" fill="none" stroke={GREEN} strokeWidth="1.6" />
              <path d="M8 5v9.500M5 7.500h6M2 9.500c0 3 2.500 5 6 5s6-2 6-5" fill="none" stroke={GREEN} strokeWidth="1.8" />
            </Ico>
          </div>
        </div>
        <Viewport />
      </div>
      <div className="mt-[20px] h-[67px] shrink-0 bg-[#323a4e] shadow-[0_0_0_2px_#1b1f2a] flex items-center pl-[21px] pr-[18px] text-[30px] text-[#c4c7cf]">
        <svg width="16" height="16" viewBox="0 0 16 16" className="shrink-0"><circle cx="8" cy="8" r="8" fill="#ff5d5d" /></svg>
        <span className="ml-[4px] w-[87px] whitespace-nowrap">출력</span>
        <svg width="16" height="16" viewBox="0 0 16 16" className="shrink-0">
          <circle cx="8" cy="8" r="8" fill="#ff5d5d" />
          <path d="M8 0a8 8 0 0 1 0 16z" fill="#ffdd65" />
        </svg>
        <span className="ml-[4px] w-[173px] whitespace-nowrap">디버거 (35)</span>
        <span className="w-[115px] whitespace-nowrap">오디오</span>
        <span className="whitespace-nowrap">애니메이션</span>
        <span className="ml-auto text-[28px] text-[#7c808c]">3.3.2.stable</span>
      </div>
    </div>
  );
}

function Inspector() {
  return (
    <div className="w-[508px] shrink-0 ml-[20px] flex flex-col">
      <DockTabs tabs={[{ label: '인스펙터', w: 'w-[148px]', active: true }, { label: '노드', w: 'w-[93px]' }]} />
      <div className="h-[2018px] bg-[#323a4e] shadow-[0_0_0_2px_#1b1f2a] flex flex-col">
        <div className="h-[65px] shrink-0 flex items-center pl-[20px] pr-[20px]">
          <Ico>
            <path d="M2 1h7v4h4v5H9v5H2z" fill={WHITE} />
            <path d="M10 1l3 3h-3z" fill={WHITE} />
            <path d="M11 9h2v2.500h2.500v2H13V16h-2v-2.500H8.500v-2H11z" fill="#6fe59b" />
          </Ico>
          <div className="ml-[32px]">
            <Ico>
              <path d="M2 2h4l1.500 1.500H12V6H5L3 14H2a1 1 0 0 1-1-1V3a1 1 0 0 1 1-1zM5.500 7H15l-1.500 8H4z" fill={WHITE} />
            </Ico>
          </div>
          <div className="ml-[32px]">
            <Ico>
              <path fillRule="evenodd" d="M2.500 1H4v5h7V1h1.500L15 3.500V13.500a1.500 1.500 0 0 1-1.500 1.500h-11A1.500 1.500 0 0 1 1 13.500v-11A1.500 1.500 0 0 1 2.500 1zM8 9a2 2 0 1 0 0 4 2 2 0 0 0 0-4z" fill="#6d707c" />
            </Ico>
          </div>
          <div className="ml-auto flex items-center">
            <Angle />
            <div className="ml-[32px]"><Angle left={false} c="#6f7380" /></div>
            <div className="ml-[32px]">
              <Ico>
                <path d="M3 7.500a5.500 5.500 0 1 1 2 5" fill="none" stroke={WHITE} strokeWidth="1.8" />
                <path d="M.5 7H5.500L3 11z" fill={WHITE} />
                <path d="M8.500 4.500V8H11.500" fill="none" stroke={WHITE} strokeWidth="1.4" />
              </Ico>
            </div>
          </div>
        </div>
        <div className="h-[50px] shrink-0 flex items-center justify-end pr-[20px]">
          <Ico>
            <path d="M4.500 1v6M3 8h3v6a1.500 1.500 0 0 1-3 0z" fill="#6d707c" stroke="#6d707c" strokeWidth="1" />
            <path d="M10 1v3a2 2 0 0 0 4 0V1M12 6v9" fill="none" stroke="#6d707c" strokeWidth="1.8" />
          </Ico>
        </div>
        <div className="mx-[8px] mt-[11px] h-[50px] shrink-0 bg-[#323a4e] border-2 border-[#1f2431] flex items-center pl-[11px] pr-[12px] text-[30px] text-[#6f7380]">
          <span className="flex-1">필터 속성</span>
          <Search c="#6d707c" />
        </div>
        <div className="mx-[8px] mt-[10px] flex-1 min-h-0 mb-[9px] bg-[#262c3b] border-2 border-[#1b1f2a]" />
      </div>
    </div>
  );
}

export default function App() {
  return (
    <div className="w-[3840px] h-[2160px] overflow-hidden bg-[#20242f] flex flex-col font-['Noto_Sans','Noto_Sans_CJK_KR',sans-serif] leading-none">
      <TopBar />
      <div className="flex pl-[9px]">
        <LeftDock />
        <Center />
        <Inspector />
      </div>
    </div>
  );
}
